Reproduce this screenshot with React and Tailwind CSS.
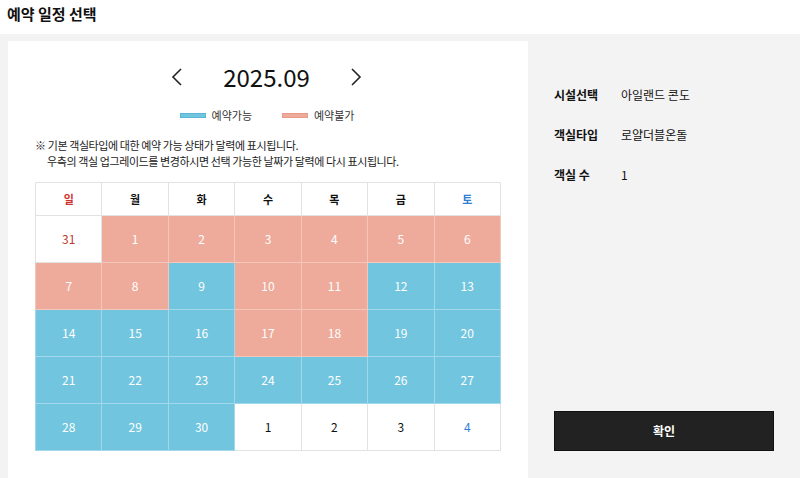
// App.jsx
const font = { fontFamily: '"Noto Sans CJK KR", "Noto Sans", sans-serif' };

const days = ["일", "월", "화", "수", "목", "금", "토"];

// s: r = 예약불가, b = 예약가능, w = 다른 달
const weeks = [
  [["31", "w"], ["1", "r"], ["2", "r"], ["3", "r"], ["4", "r"], ["5", "r"], ["6", "r"]],
  [["7", "r"], ["8", "r"], ["9", "b"], ["10", "r"], ["11", "r"], ["12", "b"], ["13", "b"]],
  [["14", "b"], ["15", "b"], ["16", "b"], ["17", "r"], ["18", "r"], ["19", "b"], ["20", "b"]],
  [["21", "b"], ["22", "b"], ["23", "b"], ["24", "b"], ["25", "b"], ["26", "b"], ["27", "b"]],
  [["28", "b"], ["29", "b"], ["30", "b"], ["1", "w"], ["2", "w"], ["3", "w"], ["4", "w"]],
];

function Chevron({ dir }) {
  return (
    <svg width="12" height="20" viewBox="0 0 12 20" fill="none" stroke="#222" strokeWidth="1.6">
      {dir === "left" ? <path d="M10 2 L2 10 L10 18" /> : <path d="M2 2 L10 10 L2 18" />}
    </svg>
  );
}

function DayCell({ n, s, col }) {
  if (s === "r") {
    return (
      <td className="h-[47px] border border-[#f4c7bb] bg-[#eeab9b] text-center text-[12px] text-white">{n}</td>
    );
  }
  if (s === "b") {
    return (
      <td className="h-[47px] border border-[#a3d8ea] bg-[#72c5de] text-center text-[12px] text-white">{n}</td>
    );
  }
  const color = n === "31" ? "text-[#c0392b]" : col === 6 ? "text-[#2f7fd6]" : "text-[#111]";
  return (
    <td className={`h-[47px] border border-[#e2e2e2] bg-white text-center text-[12px] ${color}`}>{n}</td>
  );
}

export default function App() {
  return (
    <div className="w-[800px] h-[478px] bg-white flex flex-col overflow-hidden" style={font}>
      {/* Title */}
      <div className="h-[34px] pl-[7px] flex items-center">
        <h1 className="text-[15px] font-bold text-[#111] -mt-[6px]">예약 일정 선택</h1>
      </div>

      <div className="flex-1 bg-[#f3f3f3] flex pt-[7px] pl-[8px]">
        {/* Calendar panel */}
        <div className="w-[520px] bg-white px-[27px] pt-[20px]">
          <div className="h-[32px] flex items-center justify-center gap-[40px] pr-[3px]">
            <Chevron dir="left" />
            <span className="text-[24px] text-[#111] leading-none">2025.09</span>
            <Chevron dir="right" />
          </div>

          <div className="mt-[15px] h-[14px] flex items-center justify-center gap-[30px] text-[11px] text-[#333] pr-[2px]">
            <div className="flex items-center gap-[6px]">
              <span className="w-[26px] h-[5px] bg-[#72c5de] border border-[#5bb6d4]" />
              예약가능
            </div>
            <div className="flex items-center gap-[6px]">
              <span className="w-[26px] h-[5px] bg-[#eeab9b] border border-[#e89a88]" />
              예약불가
            </div>
          </div>

          <div className="mt-[15px] text-[11px] leading-[16px] tracking-[-0.4px] text-[#222]">
            <p>※ 기본 객실타입에 대한 예약 가능 상태가 달력에 표시됩니다.</p>
            <p className="pl-[12px]">우측의 객실 업그레이드를 변경하시면 선택 가능한 날짜가 달력에 다시 표시됩니다.</p>
          </div>

          <table className="mt-[13px] w-full border-collapse table-fixed">
            <thead>
              <tr>
                {days.map((d, i) => (
                  <th
                    key={d}
                    className={`h-[33px] border border-[#e2e2e2] text-[11px] font-bold ${
                      i === 0 ? "text-[#d0312d]" : i === 6 ? "text-[#2f7fd6]" : "text-[#111]"
                    }`}
                  >
                    {d}
                  </th>
                ))}
              </tr>
            </thead>
            <tbody>
              {weeks.map((w, wi) => (
                <tr key={wi}>
                  {w.map(([n, s], ci) => (
                    <DayCell key={ci} n={n} s={s} col={ci} />
                  ))}
                </tr>
              ))}
            </tbody>
          </table>
        </div>

        {/* Info panel */}
        <div className="flex-1 pl-[26px] pt-[34px] flex flex-col">
          <div className="text-[12px] text-[#111]">
            <div className="h-[40px] flex items-center">
              <span className="w-[67px] font-bold">시설선택</span>
              <span>아일랜드 콘도</span>
            </div>
            <div className="h-[40px] flex items-center">
              <span className="w-[67px] font-bold">객실타입</span>
              <span>로얄더블온돌</span>
            </div>
            <div className="h-[40px] flex items-center">
              <span className="w-[67px] font-bold">객실 수</span>
              <span>1</span>
            </div>
          </div>
          <button className="mt-[216px] w-[220px] h-[40px] bg-[#222] border border-[#111] text-white text-[12px] font-bold">
            확인
          </button>
        </div>
      </div>
    </div>
  );
}
